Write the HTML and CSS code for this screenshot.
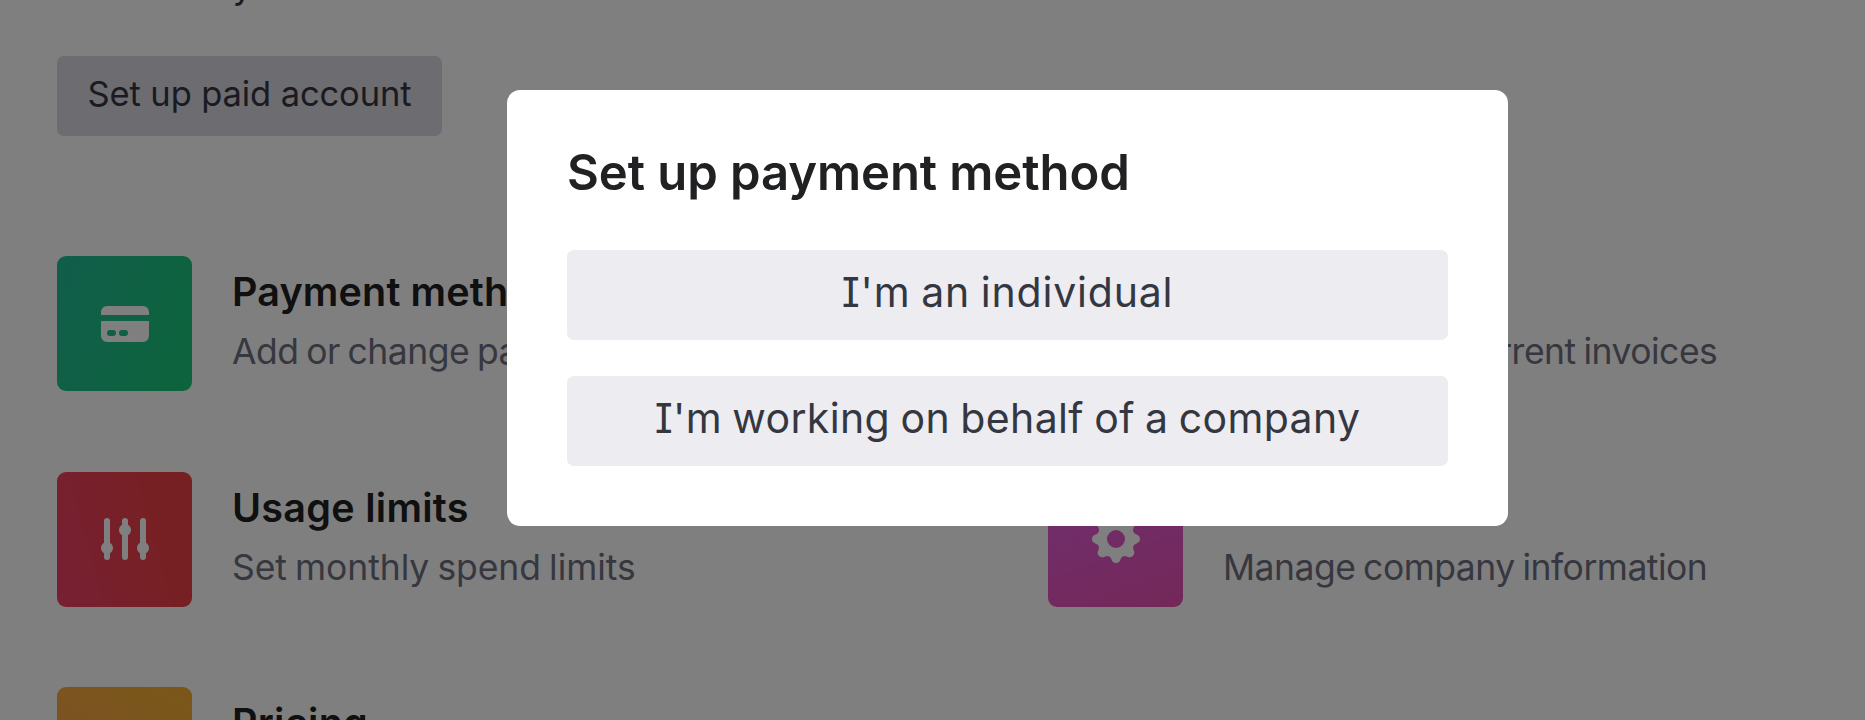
FILE: index.html
```
<!DOCTYPE html>
<html lang="en">
<head>
<meta charset="utf-8">
<title>Billing</title>
<link rel="stylesheet" href="styles.css">
</head>
<body>
<main class="page">
  <p class="plan">Currently</p>
  <button class="account-button"><span>Set up paid account</span></button>
  <section class="links">
    <a class="card">
      <span class="tile green"><svg viewBox="0 0 20 20"><path d="M4 4a2 2 0 00-2 2v1h16V6a2 2 0 00-2-2H4z"/><path fill-rule="evenodd" d="M18 9H2v5a2 2 0 002 2h12a2 2 0 002-2V9zM4 13a1 1 0 011-1h1a1 1 0 110 2H5a1 1 0 01-1-1zm5-1a1 1 0 100 2h1a1 1 0 100-2H9z"/></svg></span>
      <span class="text"><strong class="methods">Payment methods</strong><span class="desc">Add or change payment method</span></span>
    </a>
    <a class="card">
      <span class="tile purple"></span>
      <span class="text"><strong>Billing history</strong><span class="desc">View past and current invoices</span></span>
    </a>
    <a class="card">
      <span class="tile red"><svg viewBox="0 0 20 20"><path d="M5 4a1 1 0 00-2 0v7.268a2 2 0 000 3.464V16a1 1 0 102 0v-1.268a2 2 0 000-3.464V4zM11 4a1 1 0 10-2 0v1.268a2 2 0 000 3.464V16a1 1 0 102 0V8.732a2 2 0 000-3.464V4zM16 3a1 1 0 011 1v7.268a2 2 0 010 3.464V16a1 1 0 11-2 0v-1.268a2 2 0 010-3.464V4a1 1 0 011-1z"/></svg></span>
      <span class="text"><strong>Usage limits</strong><span class="desc spend">Set monthly spend limits</span></span>
    </a>
    <a class="card">
      <span class="tile purple"><svg viewBox="0 0 20 20"><path fill-rule="evenodd" d="M11.49 3.17c-.38-1.56-2.6-1.56-2.98 0a1.532 1.532 0 01-2.286.948c-1.372-.836-2.942.734-2.106 2.106.54.886.061 2.042-.947 2.287-1.561.379-1.561 2.6 0 2.978a1.532 1.532 0 01.947 2.287c-.836 1.372.734 2.942 2.106 2.106a1.532 1.532 0 012.287.947c.379 1.561 2.6 1.561 2.978 0a1.533 1.533 0 012.287-.947c1.372.836 2.942-.734 2.106-2.106a1.533 1.533 0 01.947-2.287c1.561-.379 1.561-2.6 0-2.978a1.532 1.532 0 01-.947-2.287c.836-1.372-.734-2.942-2.106-2.106a1.532 1.532 0 01-2.287-.947zM10 13a3 3 0 100-6 3 3 0 000 6z"/></svg></span>
      <span class="text"><strong>Preferences</strong><span class="desc">Manage company information</span></span>
    </a>
    <a class="card">
      <span class="tile orange"></span>
      <span class="text"><strong>Pricing</strong></span>
    </a>
  </section>
</main>
<div class="overlay">
  <div class="modal" role="dialog">
    <h2><span>Set up payment method</span></h2>
    <button class="choice"><span class="individual">I'm an individual</span></button>
    <button class="choice"><span class="behalf">I'm working on behalf of a company</span></button>
  </div>
</div>
</body>
</html>
```

FILE: styles.css
```
* { box-sizing: border-box; }
body {
  margin: 0;
  height: 720px;
  overflow: hidden;
  background: #fff;
  color: #353740;
  font-family: Inter, "Liberation Sans", sans-serif;
}
.page { height: 720px; padding-left: 57px; overflow: hidden; }
.plan { margin: -40px 0 0; height: 96px; padding-left: 38px; font-size: 36px; line-height: 50px; }
.account-button {
  display: block;
  width: 385px;
  height: 80px;
  padding: 0 0 5px;
  border: 0;
  border-radius: 7px;
  background: #d9d9e3;
  color: #353740;
  font: 400 34.5px/75px Inter, sans-serif;
  letter-spacing: -0.12px;
  white-space: nowrap;
}
.links {
  display: grid;
  grid-template-columns: 991px 800px;
  grid-auto-rows: 135px;
  row-gap: 80.5px;
  margin-top: 120px;
}
.card { display: flex; gap: 40px; }
.tile {
  display: flex;
  flex: none;
  align-items: center;
  justify-content: center;
  width: 135px;
  height: 135px;
  border-radius: 9px;
}
.tile svg { width: 60px; height: 60px; fill: #fff; }
.green { background: linear-gradient(110deg, #22bc96, #1ac878); }
.red { background: linear-gradient(75deg, #ee4068, #ee4046 75%); }
.purple { background: linear-gradient(160deg, #e060e4, #e850b0); }
.orange { background: linear-gradient(30deg, #fb9c58, #f4b030); }
.text { display: flex; flex-direction: column; padding-top: 8px; white-space: nowrap; }
.text strong {
  color: #202123;
  font-size: 39.5px;
  font-weight: 600;
  line-height: 56px;
  letter-spacing: 0.28px;
}
.text .methods { letter-spacing: 0.15px; }
.desc {
  margin-top: 7px;
  color: #6e6e80;
  font-size: 35.5px;
  line-height: 50px;
  letter-spacing: -0.5px;
  word-spacing: -1.75px;
}
.spend { letter-spacing: -0.07px; }
.overlay {
  position: fixed;
  inset: 0;
  display: flex;
  align-items: flex-start;
  justify-content: center;
  padding: 90px 0 0;
  background: rgba(0, 0, 0, .5);
}
.modal {
  display: flex;
  flex-direction: column;
  width: 1001px;
  height: 436px;
  margin-left: 150px;
  padding: 43px 60px 0;
  border-radius: 13px;
  background: #fff;
}
h2 {
  margin: 0;
  height: 117px;
  color: #202123;
  font-size: 49px;
  font-weight: 600;
  line-height: 80px;
  letter-spacing: -0.07px;
  white-space: nowrap;
}
.choice {
  width: 881px;
  height: 90px;
  margin-bottom: 36px;
  padding: 0 0 6px;
  border: 0;
  border-radius: 7px;
  background: #ececf1;
  color: #353740;
  font: 400 41px/84px Inter, sans-serif;
  font-feature-settings: "cv08" 1;
  white-space: nowrap;
}
.individual { letter-spacing: 0.8px; word-spacing: -1.5px; }
.behalf { letter-spacing: 0.35px; word-spacing: -1.5px; }
```
